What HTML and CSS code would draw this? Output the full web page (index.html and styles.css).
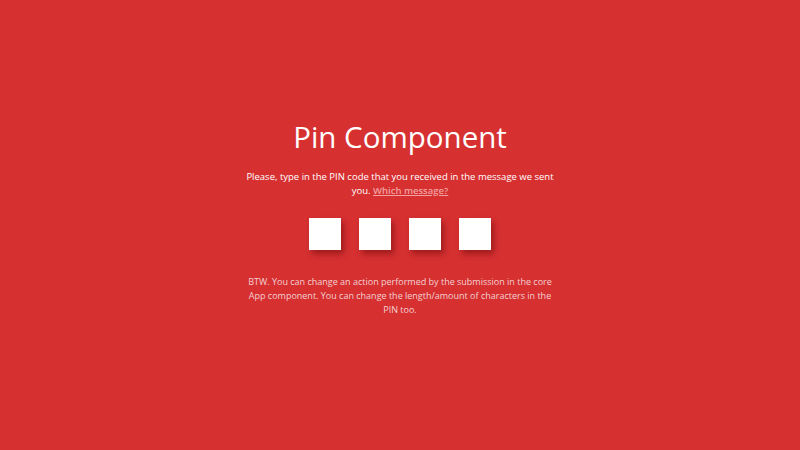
FILE: index.html
```html
<!DOCTYPE html>
<html>
<head>
<meta charset="utf-8">
<link rel="stylesheet" href="styles.css">
</head>
<body>
<main class="page">
  <h1 class="title">Pin Component</h1>
  <p class="lead">Please, type in the PIN code that you received in the message we sent you. <a class="link" href="#">Which message?</a></p>
  <div class="pins">
    <input class="pin" type="text" maxlength="1">
    <input class="pin" type="text" maxlength="1">
    <input class="pin" type="text" maxlength="1">
    <input class="pin" type="text" maxlength="1">
  </div>
  <p class="note">BTW. You can change an action performed by the submission in the core App component. You can change the length/amount of characters in the PIN too.</p>
</main>
</body>
</html>
```
FILE: styles.css
```css
html, body {
  margin: 0;
  padding: 0;
  height: 100%;
}
body {
  background: #d63031;
  font-family: "Open Sans", "Noto Sans", sans-serif;
  color: #fff;
}
.page {
  height: 100%;
  box-sizing: border-box;
  padding-bottom: 16px;
  display: flex;
  flex-direction: column;
  align-items: center;
  justify-content: center;
  text-align: center;
}
.title {
  margin: 0;
  font-weight: 400;
  font-size: 29.5px;
  line-height: 40px;
}
.lead {
  margin: 13px 0 0;
  width: 314px;
  font-size: 9.5px;
  line-height: 14px;
}
.link {
  color: #f3a0a0;
  font-weight: 600;
}
.pins {
  display: flex;
  gap: 18px;
  margin-top: 20px;
}
.pin {
  width: 32px;
  height: 32px;
  box-sizing: border-box;
  border: none;
  background: #fff;
  padding: 0;
  box-shadow: 3px 4px 6px rgba(90, 0, 0, 0.45);
  outline: none;
}
.note {
  margin: 25px 0 0;
  width: 308px;
  font-size: 9px;
  line-height: 14px;
  color: rgba(255, 255, 255, 0.78);
}
```
